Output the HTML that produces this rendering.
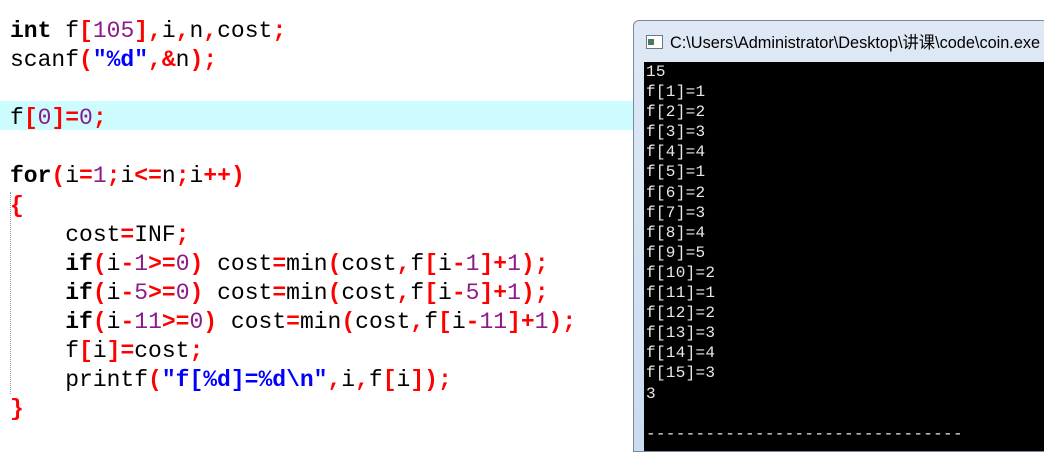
<!DOCTYPE html>
<html><head><meta charset="utf-8"><style>
body{margin:0;width:1044px;height:440px;overflow:hidden;background:#fff;position:relative;font-family:"Liberation Mono",monospace}
.code{position:absolute;left:10px;top:17px;font-size:23px;line-height:29.1px;color:#000;white-space:pre}
.hl{position:absolute;left:0;top:101px;width:640px;height:29px;background:#ccfcfd}
.r{color:#f00;font-weight:bold}.p{color:#8b1a8b}.b{color:#00f;font-weight:bold}.k{font-weight:bold}
.guide{position:absolute;left:10px;top:192px;height:202px;border-left:1px dotted #999}
.win{position:absolute;left:633px;top:20px;width:420px;height:430px;background:linear-gradient(#dfe9f5,#c9dcf0);border:1px solid #7a8a9c;border-radius:6px 0 0 0}
.title{position:absolute;left:36px;top:12px;font-family:"Liberation Sans","Noto Sans CJK SC",sans-serif;font-size:16.3px;line-height:20px;color:#000;white-space:nowrap}
.ico{position:absolute;left:12px;top:14px;width:15px;height:12px;background:#fff;border:1px solid #6a7a8a}
.ico:before{content:"";position:absolute;left:1px;top:3px;width:6px;height:6px;background:#4a7a5a}
.con{position:absolute;left:10px;top:41px;right:0;bottom:0;background:#000;color:#e8e8e8;font-size:16px;line-height:20.1px;white-space:pre;padding-left:2px;letter-spacing:0.3px}
</style></head><body>
<div class="hl"></div>
<div class="guide"></div>
<div class="code"><span class="k">int</span> f<span class="r">[</span><span class="p">105</span><span class="r">],</span>i<span class="r">,</span>n<span class="r">,</span>cost<span class="r">;</span>
scanf<span class="r">(</span><span class="b">"%d"</span><span class="r">,&amp;</span>n<span class="r">);</span>

f<span class="r">[</span><span class="p">0</span><span class="r">]=</span><span class="p">0</span><span class="r">;</span>

<span class="k">for</span><span class="r">(</span>i<span class="r">=</span><span class="p">1</span><span class="r">;</span>i<span class="r">&lt;=</span>n<span class="r">;</span>i<span class="r">++)</span>
<span class="r">{</span>
    cost<span class="r">=</span>INF<span class="r">;</span>
    <span class="k">if</span><span class="r">(</span>i<span class="r">-</span><span class="p">1</span><span class="r">&gt;=</span><span class="p">0</span><span class="r">)</span> cost<span class="r">=</span>min<span class="r">(</span>cost<span class="r">,</span>f<span class="r">[</span>i<span class="r">-</span><span class="p">1</span><span class="r">]+</span><span class="p">1</span><span class="r">);</span>
    <span class="k">if</span><span class="r">(</span>i<span class="r">-</span><span class="p">5</span><span class="r">&gt;=</span><span class="p">0</span><span class="r">)</span> cost<span class="r">=</span>min<span class="r">(</span>cost<span class="r">,</span>f<span class="r">[</span>i<span class="r">-</span><span class="p">5</span><span class="r">]+</span><span class="p">1</span><span class="r">);</span>
    <span class="k">if</span><span class="r">(</span>i<span class="r">-</span><span class="p">11</span><span class="r">&gt;=</span><span class="p">0</span><span class="r">)</span> cost<span class="r">=</span>min<span class="r">(</span>cost<span class="r">,</span>f<span class="r">[</span>i<span class="r">-</span><span class="p">11</span><span class="r">]+</span><span class="p">1</span><span class="r">);</span>
    f<span class="r">[</span>i<span class="r">]=</span>cost<span class="r">;</span>
    printf<span class="r">(</span><span class="b">"f[%d]=%d\n"</span><span class="r">,</span>i<span class="r">,</span>f<span class="r">[</span>i<span class="r">]);</span>
<span class="r">}</span></div>
<div class="win">
<div class="ico"></div>
<div class="title">C:\Users\Administrator\Desktop\讲课\code\coin.exe</div>
<div class="con">15
f[1]=1
f[2]=2
f[3]=3
f[4]=4
f[5]=1
f[6]=2
f[7]=3
f[8]=4
f[9]=5
f[10]=2
f[11]=1
f[12]=2
f[13]=3
f[14]=4
f[15]=3
3

--------------------------------</div>
</div>
</body></html>
